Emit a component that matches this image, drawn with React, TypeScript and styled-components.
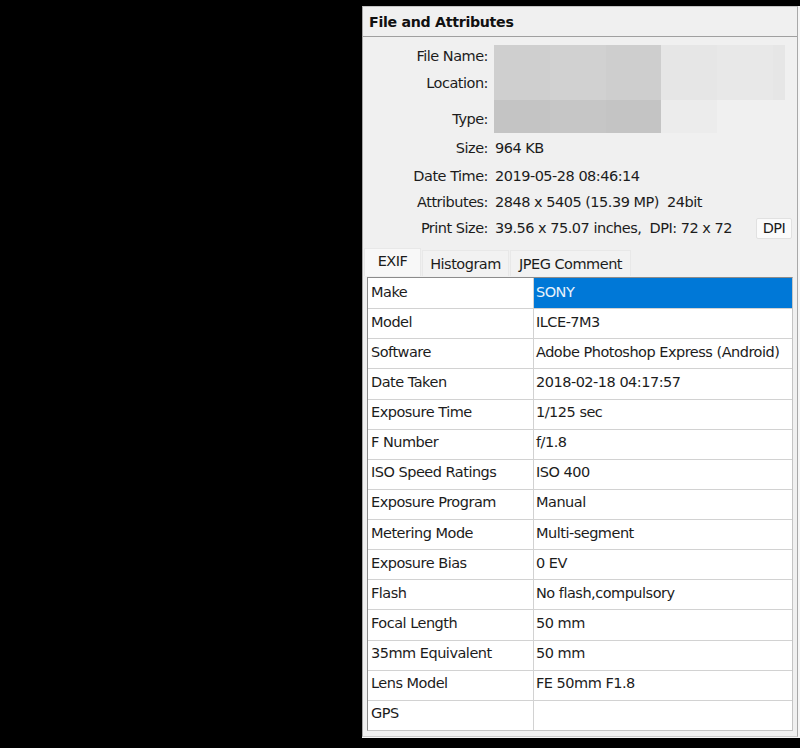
import React from "react";
import styled, { createGlobalStyle } from "styled-components";

const Global = createGlobalStyle`
  html, body { margin: 0; padding: 0; background: #000; }
  body { width: 800px; height: 748px; overflow: hidden; font-family: "DejaVu Sans", sans-serif; }
`;

const Page = styled.div`
  width: 800px;
  height: 748px;
  background: #000;
  display: flex;
  justify-content: flex-end;
  align-items: flex-start;
  padding-top: 6px;
  box-sizing: border-box;
`;

const Shell = styled.div`
  padding: 0 2px 1px 0;
  background: #f6f6f6;
`;

const Panel = styled.div`
  width: 436px;
  height: 731px;
  box-sizing: border-box;
  background: #f0f0f0;
  border: 1px solid #a8a8a8;
  border-top-color: #c4c4c4;
  border-bottom-color: #cccccc;
  display: flex;
  flex-direction: column;
  font-family: "DejaVu Sans", sans-serif;
  font-size: 14.5px;
  letter-spacing: -0.5px;
  color: #1c1c1c;
`;

const Header = styled.div`
  height: 29px;
  flex: none;
  display: flex;
  align-items: center;
  padding-left: 6px;
  border-bottom: 1px solid #a0a0a0;
  font-family: "DejaVu Sans", sans-serif;
  font-weight: 700;
  font-size: 14.2px;
  letter-spacing: -0.3px;
  color: #111;
`;

const InfoGrid = styled.div`
  margin-top: 8px;
  flex: none;
  display: grid;
  grid-template-columns: 125px 297px;
  grid-template-rows: 22px 33px 33px 30px 26px 26px 26px;
  column-gap: 6px;
`;

const Label = styled.div<{ $row: number; $top?: number; $bottom?: number }>`
  grid-column: 1;
  grid-row: ${(p) => p.$row};
  display: flex;
  align-items: center;
  justify-content: flex-end;
  padding-top: ${(p) => p.$top ?? 0}px;
  padding-bottom: ${(p) => p.$bottom ?? 0}px;
  white-space: nowrap;
`;

const Value = styled.div<{ $row: number }>`
  grid-column: 2;
  grid-row: ${(p) => p.$row};
  display: flex;
  align-items: center;
  padding-left: 1px;
  white-space: pre;
`;

const Redaction = styled.div<{ $from: number; $to: number }>`
  grid-column: 2;
  grid-row: ${(p) => p.$from} / ${(p) => p.$to};
  display: flex;
`;

const Pixel = styled.div<{ $w: number; $c: string }>`
  width: ${(p) => p.$w}px;
  background: ${(p) => p.$c};
  flex: none;
`;

const DpiButton = styled.button`
  margin-left: auto;
  margin-right: -1px;
  width: 36px;
  height: 21px;
  padding: 0;
  background: #fbfbfb;
  border: 1px solid #e1e1e1;
  border-radius: 2px;
  font: inherit;
  letter-spacing: inherit;
  color: #1c1c1c;
`;

const TabBar = styled.div`
  margin: 7px 0 0 1px;
  height: 28px;
  flex: none;
  display: flex;
  align-items: flex-end;
  gap: 1px;
`;

const Tab = styled.div<{ $active?: boolean; $w: number }>`
  width: ${(p) => p.$w}px;
  height: ${(p) => (p.$active ? 28 : 26)}px;
  box-sizing: border-box;
  display: flex;
  align-items: center;
  justify-content: center;
  padding-bottom: ${(p) => (p.$active ? 3 : 0)}px;
  background: ${(p) => (p.$active ? "#f8f8f8" : "#f2f2f2")};
  border: 1px solid #e8e8e8;
  border-bottom: none;
`;

const Table = styled.div`
  margin: 1px 0 0 4px;
  width: 426px;
  box-sizing: border-box;
  border: 1px solid #8c8c8c;
  border-right-color: #c4c4c4;
  border-bottom-color: #c4c4c4;
  background: #fff;
  display: grid;
  grid-template-columns: 166px 1fr;
  grid-auto-rows: 30.13px;
`;

const Cell = styled.div<{ $selected?: boolean; $first?: boolean; $top?: boolean }>`
  display: flex;
  align-items: center;
  box-sizing: border-box;
  padding-left: ${(p) => (p.$first ? 3 : 2)}px;
  padding-bottom: ${(p) => (p.$top ? 3 : 4)}px;
  border-top: ${(p) => (p.$top ? "none" : "1px solid #d2d2d2")};
  border-right: ${(p) => (p.$first ? "1px solid #d2d2d2" : "none")};
  background: ${(p) => (p.$selected ? "#0078d7" : "#fff")};
  color: ${(p) => (p.$selected ? "#e8f2fb" : "#1c1c1c")};
  white-space: nowrap;
`;

const rows: [string, string][] = [
  ["Make", "SONY"],
  ["Model", "ILCE-7M3"],
  ["Software", "Adobe Photoshop Express (Android)"],
  ["Date Taken", "2018-02-18 04:17:57"],
  ["Exposure Time", "1/125 sec"],
  ["F Number", "f/1.8"],
  ["ISO Speed Ratings", "ISO 400"],
  ["Exposure Program", "Manual"],
  ["Metering Mode", "Multi-segment"],
  ["Exposure Bias", "0 EV"],
  ["Flash", "No flash,compulsory"],
  ["Focal Length", "50 mm"],
  ["35mm Equivalent", "50 mm"],
  ["Lens Model", "FE 50mm F1.8"],
  ["GPS", ""],
];

export default function App() {
  return (
    <Page>
      <Global />
      <Shell>
        <Panel>
          <Header>File and Attributes</Header>
          <InfoGrid>
            <Label $row={1}>File Name:</Label>
            <Label $row={2} $bottom={1}>Location:</Label>
            <Label $row={3} $top={5}>Type:</Label>
            <Redaction $from={1} $to={3}>
              <Pixel $w={56} $c="#cfcfcf" />
              <Pixel $w={56} $c="#d1d1d1" />
              <Pixel $w={55} $c="#cecece" />
              <Pixel $w={56} $c="#e6e6e6" />
              <Pixel $w={56} $c="#e8e8e8" />
              <Pixel $w={12} $c="#e6e6e6" />
            </Redaction>
            <Redaction $from={3} $to={4}>
              <Pixel $w={56} $c="#c4c4c4" />
              <Pixel $w={56} $c="#c6c6c6" />
              <Pixel $w={55} $c="#c4c4c4" />
              <Pixel $w={56} $c="#ececec" />
            </Redaction>
            <Label $row={4}>Size:</Label>
            <Value $row={4}>964 KB</Value>
            <Label $row={5}>Date Time:</Label>
            <Value $row={5}>2019-05-28 08:46:14</Value>
            <Label $row={6}>Attributes:</Label>
            <Value $row={6}>{"2848 x 5405 (15.39 MP)  24bit"}</Value>
            <Label $row={7}>Print Size:</Label>
            <Value $row={7}>
              {"39.56 x 75.07 inches,  DPI: 72 x 72"}
              <DpiButton>DPI</DpiButton>
            </Value>
          </InfoGrid>
          <TabBar>
            <Tab $active $w={57}>EXIF</Tab>
            <Tab $w={87}>Histogram</Tab>
            <Tab $w={121}>JPEG Comment</Tab>
          </TabBar>
          <Table>
            {rows.map(([k, v], i) => (
              <React.Fragment key={k}>
                <Cell $first $top={i === 0}>{k}</Cell>
                <Cell $top={i === 0} $selected={i === 0}>{v}</Cell>
              </React.Fragment>
            ))}
          </Table>
        </Panel>
      </Shell>
    </Page>
  );
}
